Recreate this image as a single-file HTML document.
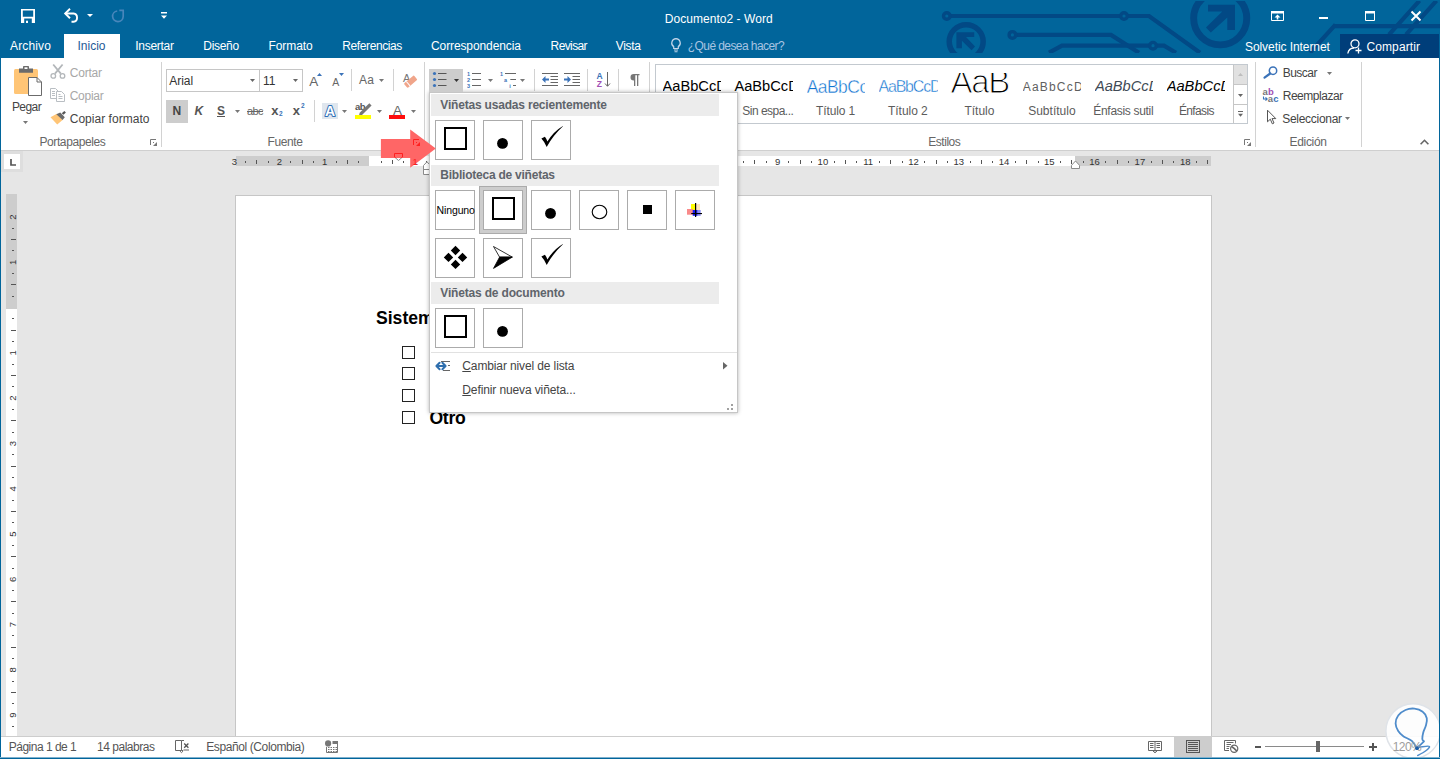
<!DOCTYPE html>
<html lang="es">
<head>
<meta charset="utf-8">
<title>Documento2 - Word</title>
<style>
*{box-sizing:border-box;margin:0;padding:0}
html,body{width:1440px;height:759px;overflow:hidden;background:#e6e6e6}
body{font-family:"Liberation Sans",sans-serif;font-size:12px;color:#444;position:relative}
.abs{position:absolute}
svg{display:block;overflow:visible}
svg text{font-family:"Liberation Sans",sans-serif}
.t{position:absolute;white-space:nowrap;line-height:1}
</style>
</head>
<body>
<div class="abs" style="left:0px;top:0px;width:1440px;height:58px;background:#01659b;"></div>
<svg class="abs" style="left:0;top:1.300px;overflow:hidden" width="1440" height="51.500" viewBox="0 1.300 1440 51.500"><g fill="none" stroke="#024985" stroke-width="4.2" stroke-linejoin="miter">
<path d="M950 16.300H1120.500"/><path d="M1127.500 16.300H1149L1200 53"/>
<path d="M1016 35.200H1111L1139 53"/>
<path d="M1049 53L1062 46H1149.500"/><path d="M1156.500 46H1164L1176 53"/>
<path d="M1334 26.500H1440M1335.500 25L1310 53"/>
<path d="M1419.500 1L1389 35M1436.500 1L1406 35"/>
</g>
<g fill="none" stroke="#024985" stroke-width="3.400">
<circle cx="946.800" cy="16.300" r="3.300"/><circle cx="1124" cy="16.300" r="3.300"/>
<circle cx="1012.400" cy="35.200" r="3.300"/><circle cx="1153" cy="46" r="3.300"/>
</g>
<g fill="none" stroke="#024985">
<circle cx="966.200" cy="41.900" r="16.950" stroke-width="5.500"/>
<circle cx="1220.200" cy="18.600" r="26.550" stroke-width="6.900"/>
</g>
<g fill="#024985">
<path d="M956.400 32.600H974.200V37.400H966L975 46.800L971.600 50.500L961.900 41V48.600H956.400Z"/>
<path d="M1208 5.100H1235V30.400H1227.300V17.800L1210.800 32.800L1206 27.700L1222.300 11.900H1208Z"/>
</g></svg>
<div class="abs" style="left:1340px;top:34px;width:99px;height:24px;background:#003e7a;"></div>
<svg class="abs" style="left:21px;top:8.5px;" width="14" height="14" viewBox="0 0 14 14"><path d="M0 0H14V14H0Z M1.800 1.600V7.700H12.200V1.600Z M3.200 9.500V14H10.800V9.500Z" fill="#fff" fill-rule="evenodd"/><rect x="5" y="11.700" width="2" height="2.300" fill="#fff"/></svg>
<svg class="abs" style="left:64px;top:8px;" width="15" height="15" viewBox="0 0 15 15"><path d="M1 5.500H9.500A4.200 4.200 0 0 1 9.500 13.800H7.500" fill="none" stroke="#fff" stroke-width="1.900"/><path d="M6 0.800L1.200 5.500L6 10.200" fill="none" stroke="#fff" stroke-width="1.900"/></svg>
<svg class="abs" style="left:87px;top:14px;" width="6" height="3" viewBox="0 0 6 3"><path d="M0 0H6 L3 3Z" fill="#fff"/></svg>
<svg class="abs" style="left:111px;top:8px;" width="14" height="15" viewBox="0 0 14 15"><path d="M6.200 3A5.300 5.300 0 1 0 12.200 8.500V2.300M13 2.300H8.300" fill="none" stroke="#4886bb" stroke-width="1.700"/></svg>
<svg class="abs" style="left:161px;top:12px;" width="6" height="7" viewBox="0 0 6 7"><path d="M0 0H6V1.400H0Z M0 3.500H6L3 6.800Z" fill="#fff"/></svg>
<div class="t" style="left:664.70px;top:13.00px;font-size:12px;color:#fff;letter-spacing:0.050px;">Documento2 - Word</div>
<svg class="abs" style="left:1271px;top:11px;" width="13" height="10" viewBox="0 0 13 10"><path d="M0.500 0.500H12.500V9.500H0.500Z" fill="none" stroke="#fff" stroke-width="1"/><path d="M0 0H13V2.500H0Z" fill="#fff"/><path d="M6.500 3.500L3.500 6.500H5.700V8.500H7.300V6.500H9.500Z" fill="#fff"/></svg>
<div class="abs" style="left:1319px;top:17px;width:9px;height:2px;background:#fff;"></div>
<svg class="abs" style="left:1365px;top:11px;" width="10" height="10" viewBox="0 0 10 10"><path d="M0.500 0.500H9.500V9.500H0.500Z" fill="none" stroke="#fff" stroke-width="1"/><path d="M0 0H10V2.500H0Z" fill="#fff"/></svg>
<svg class="abs" style="left:1411px;top:11px;" width="10" height="10" viewBox="0 0 10 10"><path d="M0.500 0.500L9.500 9.500M9.500 0.500L0.500 9.500" stroke="#fff" stroke-width="2"/></svg>
<div class="abs" style="left:64px;top:34px;width:56px;height:24px;background:#fff;"></div>
<div class="t" style="left:10.00px;top:40.00px;font-size:12px;color:#fff;letter-spacing:0.141px;">Archivo</div>
<div class="t" style="left:77.50px;top:40.00px;font-size:12px;color:#1e5a96;letter-spacing:-0.002px;">Inicio</div>
<div class="t" style="left:135.20px;top:40.00px;font-size:12px;color:#fff;letter-spacing:-0.273px;">Insertar</div>
<div class="t" style="left:203.30px;top:40.00px;font-size:12px;color:#fff;letter-spacing:-0.309px;">Diseño</div>
<div class="t" style="left:268.50px;top:40.00px;font-size:12px;color:#fff;letter-spacing:-0.068px;">Formato</div>
<div class="t" style="left:342.30px;top:40.00px;font-size:12px;color:#fff;letter-spacing:-0.403px;">Referencias</div>
<div class="t" style="left:431.00px;top:40.00px;font-size:12px;color:#fff;letter-spacing:-0.106px;">Correspondencia</div>
<div class="t" style="left:550.60px;top:40.00px;font-size:12px;color:#fff;letter-spacing:-0.611px;">Revisar</div>
<div class="t" style="left:615.80px;top:40.00px;font-size:12px;color:#fff;letter-spacing:-0.332px;">Vista</div>
<svg class="abs" style="left:671px;top:38px;" width="10" height="15" viewBox="0 0 10 15"><path d="M5 0.700A4.300 4.300 0 0 1 7.300 8.600V10.500H2.700V8.600A4.300 4.300 0 0 1 5 0.700Z" fill="none" stroke="#c4d6ea" stroke-width="1.200"/><path d="M3 12H7M3.500 13.800H6.500" stroke="#c4d6ea" stroke-width="1.100"/></svg>
<div class="t" style="left:687.80px;top:40.00px;font-size:12px;color:#a8c4e2;letter-spacing:-0.580px;">¿Qué desea hacer?</div>
<div class="t" style="left:1245.00px;top:41.00px;font-size:12px;color:#fff;letter-spacing:-0.073px;">Solvetic Internet</div>
<svg class="abs" style="left:1347px;top:39px;" width="16" height="15" viewBox="0 0 16 15"><circle cx="8" cy="4.800" r="4" fill="none" stroke="#fff" stroke-width="1.300"/><path d="M0.800 14.500C1.500 10.500 4 9 7 9" fill="none" stroke="#fff" stroke-width="1.300"/><path d="M11.500 8.500V14.500M8.500 11.500H14.500" stroke="#fff" stroke-width="1.300"/></svg>
<div class="t" style="left:1366.50px;top:41.00px;font-size:12px;color:#fff;letter-spacing:0.092px;">Compartir</div>
<div class="abs" style="left:1px;top:58px;width:1439px;height:92px;background:#fff;"></div>
<div class="abs" style="left:0px;top:150px;width:1440px;height:1px;background:#cfcfcf;"></div>
<div class="abs" style="left:161px;top:62px;width:1px;height:85px;background:#d2d2d2;"></div>
<div class="abs" style="left:424px;top:62px;width:1px;height:85px;background:#d2d2d2;"></div>
<div class="abs" style="left:649px;top:62px;width:1px;height:85px;background:#d2d2d2;"></div>
<div class="abs" style="left:1255px;top:62px;width:1px;height:85px;background:#d2d2d2;"></div>
<div class="abs" style="left:1361px;top:62px;width:1px;height:85px;background:#d2d2d2;"></div>
<svg class="abs" style="left:13px;top:65px;" width="30" height="32" viewBox="0 0 30 32"><rect x="1" y="4" width="24" height="25" rx="1.500" fill="#ffc576"/>
<path d="M6 3.500H10V1.800Q10 1 10.800 1H15.200Q16 1 16 1.800V3.500H20V7.700H6Z" fill="#6b6b6b"/><rect x="11.500" y="2.300" width="3" height="1.700" fill="#fff"/>
<path d="M15.500 12.500H24L28.500 17V30.500H15.500Z" fill="#fff" stroke="#6b6b6b" stroke-width="1"/><path d="M24 12.500V17H28.500" fill="none" stroke="#6b6b6b" stroke-width="1"/></svg>
<div class="t" style="left:11.90px;top:101.00px;font-size:12px;color:#444;letter-spacing:-0.564px;">Pegar</div>
<svg class="abs" style="left:23px;top:121.3px;" width="5" height="3" viewBox="0 0 5 3"><path d="M0 0H5 L2.5 3Z" fill="#777"/></svg>
<svg class="abs" style="left:50px;top:64px;" width="16" height="15" viewBox="0 0 16 15"><path d="M3.200 0.500L10.800 9.600M12.600 0.500L5 9.600" stroke="#b3b7ba" stroke-width="1.800" fill="none"/>
<circle cx="3.300" cy="11.900" r="2.300" fill="none" stroke="#b3b7ba" stroke-width="1.300"/><circle cx="12.500" cy="11.900" r="2.300" fill="none" stroke="#b3b7ba" stroke-width="1.300"/></svg>
<div class="t" style="left:69.70px;top:67.00px;font-size:12px;color:#a7a7a7;letter-spacing:-0.190px;">Cortar</div>
<svg class="abs" style="left:50px;top:88px;" width="16" height="14" viewBox="0 0 16 14"><path d="M0.500 0.500H5.500L8 3V4.500M0.500 0.500V10.500H6" fill="none" stroke="#b9bec3" stroke-width="1"/>
<path d="M2 3.500H5M2 5.500H5M2 7.500H5" stroke="#b9bec3" stroke-width="1"/>
<path d="M6.500 3.500H11.500L14.500 6.500V13.500H6.500Z" fill="#fff" stroke="#b9bec3" stroke-width="1"/>
<path d="M8.500 8.500H12.500M8.500 10.500H12.500M8.500 6.500H10.500" stroke="#b9bec3" stroke-width="1"/></svg>
<div class="t" style="left:69.70px;top:90.00px;font-size:12px;color:#a7a7a7;letter-spacing:-0.275px;">Copiar</div>
<svg class="abs" style="left:50px;top:111px;" width="16" height="14" viewBox="0 0 16 14"><path d="M0.500 6.300L6.800 2.800L12.600 8.900L7.200 13.500Z" fill="#ffc576"/>
<path d="M6.300 3.200L10.300 1.400L14.800 6.300L12.600 8.900Z" fill="#6b6b6b"/>
<path d="M11.700 2.300L14.400 0.100L15.900 1.400L13.500 3.700Z" fill="#555"/></svg>
<div class="t" style="left:69.70px;top:113.00px;font-size:12px;color:#444;letter-spacing:0.031px;">Copiar formato</div>
<div class="t" style="left:39.50px;top:136.00px;font-size:12px;color:#666;letter-spacing:-0.410px;">Portapapeles</div>
<svg class="abs" style="left:150px;top:139px;" width="7" height="7" viewBox="0 0 7 7"><path d="M0.500 6V0.500H6" fill="none" stroke="#777" stroke-width="1"/><rect x="3" y="3" width="1" height="1" fill="#777"/><path d="M7 3V7H3Z" fill="#777"/></svg>
<div class="abs" style="left:166px;top:69px;width:94px;height:23px;background:#fff;border:1px solid #c6c6c6;"></div>
<div class="abs" style="left:259px;top:69px;width:44px;height:23px;background:#fff;border:1px solid #c6c6c6;"></div>
<div class="t" style="left:169.30px;top:75.00px;font-size:12px;color:#333;letter-spacing:-0.061px;">Arial</div>
<svg class="abs" style="left:250px;top:79.3px;" width="5" height="3" viewBox="0 0 5 3"><path d="M0 0H5 L2.5 3Z" fill="#666"/></svg>
<div class="t" style="left:263.00px;top:75.00px;font-size:12px;color:#333;letter-spacing:-0.079px;">11</div>
<svg class="abs" style="left:293px;top:79.3px;" width="5" height="3" viewBox="0 0 5 3"><path d="M0 0H5 L2.5 3Z" fill="#666"/></svg>
<div class="t" style="left:309.30px;top:74.75px;font-size:13.5px;color:#666;letter-spacing:0.196px;">A</div>
<svg class="abs" style="left:317px;top:73px;" width="5" height="3" viewBox="0 0 5 3"><path d="M0 3H5L2.500 0Z" fill="#3b73b9"/></svg>
<div class="t" style="left:332.20px;top:76.75px;font-size:10.5px;color:#666;letter-spacing:0.297px;">A</div>
<svg class="abs" style="left:339px;top:73px;" width="5" height="3" viewBox="0 0 5 3"><path d="M0 0H5 L2.5 3Z" fill="#3b73b9"/></svg>
<div class="abs" style="left:351px;top:69px;width:1px;height:22px;background:#d2d2d2;"></div>
<div class="t" style="left:359.00px;top:74.00px;font-size:12px;color:#666;letter-spacing:0.161px;">Aa</div>
<svg class="abs" style="left:379px;top:79px;" width="5" height="3" viewBox="0 0 5 3"><path d="M0 0H5 L2.5 3Z" fill="#777"/></svg>
<div class="abs" style="left:393px;top:69px;width:1px;height:22px;background:#d2d2d2;"></div>
<div class="t" style="left:403.00px;top:72.50px;font-size:11px;color:#777;letter-spacing:-0.637px;">A</div>
<svg class="abs" style="left:403px;top:74px;" width="15" height="15" viewBox="0 0 15 15"><g transform="rotate(-40 7.500 7.500)"><rect x="1" y="4.800" width="13" height="5.800" rx="1" fill="#f0a58a"/><rect x="3.800" y="4.800" width="1" height="5.800" fill="#fff"/></g></svg>
<div class="abs" style="left:166px;top:100px;width:22px;height:23px;background:#cdcdcd;"></div>
<div class="t" style="left:172.60px;top:105.00px;font-size:12px;color:#444;letter-spacing:0.134px;font-weight:bold;">N</div>
<div class="t" style="left:194.40px;top:105.00px;font-size:12px;color:#555;letter-spacing:-0.666px;font-weight:bold;font-style:italic;">K</div>
<div class="t" style="left:217.00px;top:105.00px;font-size:12px;color:#555;letter-spacing:-0.504px;font-weight:bold;">S</div>
<div class="abs" style="left:216.5px;top:116px;width:8.5px;height:1px;background:#555;"></div>
<svg class="abs" style="left:235.3px;top:110px;" width="5" height="3" viewBox="0 0 5 3"><path d="M0 0H5 L2.5 3Z" fill="#777"/></svg>
<div class="t" style="left:247.00px;top:105.50px;font-size:11px;color:#666;letter-spacing:-0.578px;text-decoration:line-through;">abc</div>
<div class="t" style="left:271.20px;top:104.00px;font-size:13px;color:#555;letter-spacing:-0.030px;font-weight:bold;">x</div>
<div class="t" style="left:279.00px;top:111.25px;font-size:6.5px;color:#3b73b9;font-weight:bold;">2</div>
<div class="t" style="left:292.80px;top:104.00px;font-size:13px;color:#555;letter-spacing:-0.030px;font-weight:bold;">x</div>
<div class="t" style="left:301.00px;top:103.25px;font-size:6.5px;color:#3b73b9;font-weight:bold;">2</div>
<div class="abs" style="left:314px;top:100px;width:1px;height:22px;background:#d2d2d2;"></div>
<div class="abs" style="left:322px;top:103px;width:16px;height:16px;background:#dfe6ee;"></div>
<svg class="abs" style="left:322px;top:103px" width="16" height="16" viewBox="0 0 16 16"><text x="8" y="12.700" text-anchor="middle" font-family="Liberation Sans, sans-serif" font-weight="bold" font-size="14" fill="#fff" stroke="#2f6fb7" stroke-width="2" paint-order="stroke" stroke-linejoin="round">A</text></svg>
<svg class="abs" style="left:342px;top:110px;" width="5" height="3" viewBox="0 0 5 3"><path d="M0 0H5 L2.5 3Z" fill="#777"/></svg>
<div class="t" style="left:355.00px;top:101.75px;font-size:9.5px;color:#555;letter-spacing:-0.543px;font-weight:bold;">ab</div>
<svg class="abs" style="left:358px;top:103px;" width="14" height="13" viewBox="0 0 14 13"><path d="M11.300 0.300L13.600 2.500L4 12L1 12.600L1.700 9.800Z" fill="#777"/></svg>
<div class="abs" style="left:355px;top:115px;width:16px;height:4px;background:#ffff00;"></div>
<svg class="abs" style="left:377px;top:110px;" width="5" height="3" viewBox="0 0 5 3"><path d="M0 0H5 L2.5 3Z" fill="#777"/></svg>
<div class="t" style="left:393.00px;top:103.75px;font-size:13.5px;color:#666;letter-spacing:-0.004px;">A</div>
<div class="abs" style="left:389px;top:115px;width:16px;height:4px;background:#ff0d0d;"></div>
<svg class="abs" style="left:411px;top:110px;" width="5" height="3" viewBox="0 0 5 3"><path d="M0 0H5 L2.5 3Z" fill="#777"/></svg>
<div class="t" style="left:267.50px;top:136.00px;font-size:12px;color:#666;letter-spacing:-0.393px;">Fuente</div>
<svg class="abs" style="left:413px;top:139px;" width="7" height="7" viewBox="0 0 7 7"><path d="M0.500 6V0.500H6" fill="none" stroke="#777" stroke-width="1"/><rect x="3" y="3" width="1" height="1" fill="#777"/><path d="M7 3V7H3Z" fill="#777"/></svg>
<div class="abs" style="left:429px;top:69px;width:34px;height:23px;background:#cdcdcd;"></div>
<svg class="abs" style="left:433px;top:69px;" width="14" height="20" viewBox="0 0 14 20"><circle cx="1.500" cy="4.5" r="1.600" fill="#3b73b9"/><rect x="5" y="4" width="8.500" height="1" fill="#555"/><circle cx="1.500" cy="10.5" r="1.600" fill="#3b73b9"/><rect x="5" y="10" width="8.500" height="1" fill="#555"/><circle cx="1.500" cy="16.5" r="1.600" fill="#3b73b9"/><rect x="5" y="16" width="8.500" height="1" fill="#555"/></svg>
<svg class="abs" style="left:454px;top:79px;" width="5" height="3" viewBox="0 0 5 3"><path d="M0 0H5 L2.5 3Z" fill="#333"/></svg>
<svg class="abs" style="left:467px;top:69px" width="15" height="20" viewBox="0 0 15 20"><rect x="5" y="4" width="9" height="1" fill="#666"/><rect x="5" y="10" width="9" height="1" fill="#666"/><rect x="5" y="16" width="9" height="1" fill="#666"/><g font-family="Liberation Sans, sans-serif" font-size="5.500" font-weight="bold" fill="#3b73b9"><text x="0" y="6.500">1</text><text x="0" y="12.500">2</text><text x="0" y="18.500">3</text></g></svg>
<svg class="abs" style="left:488px;top:79px;" width="5" height="3" viewBox="0 0 5 3"><path d="M0 0H5 L2.5 3Z" fill="#777"/></svg>
<svg class="abs" style="left:500px;top:69px" width="17" height="20" viewBox="0 0 17 20"><rect x="5" y="4" width="11" height="1" fill="#666"/><rect x="10.300" y="10" width="5.700" height="1" fill="#666"/><rect x="13" y="16" width="3" height="1" fill="#666"/><g font-family="Liberation Sans, sans-serif" font-size="5.500" font-weight="bold" fill="#3b73b9"><text x="0" y="6.500">1</text><text x="4" y="12.500">a</text><text x="9.300" y="18.500">i</text></g></svg>
<svg class="abs" style="left:520px;top:79px;" width="5" height="3" viewBox="0 0 5 3"><path d="M0 0H5 L2.5 3Z" fill="#777"/></svg>
<div class="abs" style="left:534px;top:69px;width:1px;height:22px;background:#d2d2d2;"></div>
<svg class="abs" style="left:542px;top:69px;" width="16" height="20" viewBox="0 0 16 20"><rect x="0" y="4" width="16" height="1" fill="#666"/><rect x="8.500" y="7" width="7.500" height="1" fill="#666"/><rect x="8.500" y="10" width="7.500" height="1" fill="#666"/><rect x="8.500" y="13" width="7.500" height="1" fill="#666"/><rect x="0" y="16" width="16" height="1" fill="#666"/><path d="M7 9.500H3.500V7L0 10.500L3.500 14V11.500H7Z" fill="#3b73b9"/></svg>
<svg class="abs" style="left:564px;top:69px;" width="16" height="20" viewBox="0 0 16 20"><rect x="0" y="4" width="16" height="1" fill="#666"/><rect x="8.500" y="7" width="7.500" height="1" fill="#666"/><rect x="8.500" y="10" width="7.500" height="1" fill="#666"/><rect x="8.500" y="13" width="7.500" height="1" fill="#666"/><rect x="0" y="16" width="16" height="1" fill="#666"/><path d="M0 9.500H3.500V7L7 10.500L3.500 14V11.500H0Z" fill="#3b73b9"/></svg>
<div class="abs" style="left:587px;top:69px;width:1px;height:22px;background:#d2d2d2;"></div>
<svg class="abs" style="left:596px;top:70px" width="15" height="18" viewBox="0 0 15 18"><g font-family="Liberation Sans, sans-serif" font-size="8.500" font-weight="bold"><text x="0.500" y="8.700" fill="#3b73b9">A</text><text x="0.800" y="16.500" fill="#a14fb5">Z</text></g><path d="M11.500 2V16M9 13.500L11.500 16.300L14 13.500" fill="none" stroke="#666" stroke-width="1"/></svg>
<div class="abs" style="left:618px;top:69px;width:1px;height:22px;background:#d2d2d2;"></div>
<svg class="abs" style="left:628.5px;top:74px;" width="11" height="12" viewBox="0 0 11 12"><path d="M4.800 0H10.500V1.300H9.300V12H8V1.300H6.300V12H5V6.600H4.800A3.300 3.300 0 0 1 4.800 0Z" fill="#777"/></svg>
<div class="abs" style="left:655px;top:64px;width:593px;height:60px;background:#fff;border:1px solid #c3c9cf;"></div>
<div class="t" style="left:662.50px;top:78.66px;width:58.8px;overflow:hidden;font-size:14.67px;color:#000;">AaBbCcDd</div>
<div class="t" style="left:734.40px;top:78.66px;width:58.8px;overflow:hidden;font-size:14.67px;color:#000;">AaBbCcDd</div>
<div class="t" style="left:806.70px;top:79.25px;width:58.6px;overflow:hidden;font-size:17.5px;color:#0f73d1;letter-spacing:-0.548px;-webkit-text-stroke:0.400px #fff;">AaBbCcD</div>
<div class="t" style="left:878.50px;top:78.50px;width:59px;overflow:hidden;font-size:16px;color:#0f73d1;letter-spacing:-1.206px;-webkit-text-stroke:0.350px #fff;">AaBbCcDd</div>
<div class="abs" style="left:948px;top:72.500px;width:62px;height:30px;overflow:hidden"><div class="t" style="left:2.500px;top:-7.500px;font-size:33px;color:#000;-webkit-text-stroke:1.100px #fff;letter-spacing:-1.300px">AaB</div></div>
<div class="t" style="left:1022.70px;top:81.00px;width:58.6px;overflow:hidden;font-size:12px;color:#5f5f5f;letter-spacing:1.205px;">AaBbCcDd</div>
<div class="t" style="left:1094.90px;top:78.66px;width:58.5px;overflow:hidden;font-size:14.67px;color:#404a55;font-style:italic;">AaBbCcDd</div>
<div class="t" style="left:1166.70px;top:78.66px;width:58.5px;overflow:hidden;font-size:14.67px;color:#000;font-style:italic;">AaBbCcDd</div>
<div class="t" style="left:742.30px;top:105.00px;font-size:12px;color:#5c5c5c;letter-spacing:-0.518px;">Sin espa...</div>
<div class="t" style="left:816.00px;top:105.00px;font-size:12px;color:#5c5c5c;letter-spacing:-0.103px;">Título 1</div>
<div class="t" style="left:888.00px;top:105.00px;font-size:12px;color:#5c5c5c;letter-spacing:-0.040px;">Título 2</div>
<div class="t" style="left:964.40px;top:105.00px;font-size:12px;color:#5c5c5c;letter-spacing:-0.002px;">Título</div>
<div class="t" style="left:1028.20px;top:105.00px;font-size:12px;color:#5c5c5c;letter-spacing:0.004px;">Subtítulo</div>
<div class="t" style="left:1093.30px;top:105.00px;font-size:12px;color:#5c5c5c;letter-spacing:-0.310px;">Énfasis sutil</div>
<div class="t" style="left:1178.90px;top:105.00px;font-size:12px;color:#5c5c5c;letter-spacing:-0.636px;">Énfasis</div>
<div class="abs" style="left:1233px;top:65px;width:14px;height:20px;background:#e1e1e1;border-left:1px solid #c6c6c6;border-bottom:1px solid #c6c6c6;"></div>
<div class="abs" style="left:1233px;top:85px;width:14px;height:20px;background:#fff;border-left:1px solid #c6c6c6;border-bottom:1px solid #c6c6c6;"></div>
<div class="abs" style="left:1233px;top:105px;width:14px;height:18px;background:#fff;border-left:1px solid #c6c6c6;"></div>
<svg class="abs" style="left:1238px;top:73px;" width="5" height="3" viewBox="0 0 5 3"><path d="M0 3H5L2.500 0Z" fill="#bdbdbd"/></svg>
<svg class="abs" style="left:1238px;top:94px;" width="5" height="3" viewBox="0 0 5 3"><path d="M0 0H5 L2.5 3Z" fill="#666"/></svg>
<svg class="abs" style="left:1238px;top:110.5px;" width="5" height="6" viewBox="0 0 5 6"><path d="M0 0H5V1H0Z M0 2.800H5L2.500 5.800Z" fill="#666"/></svg>
<div class="t" style="left:928.30px;top:136.00px;font-size:12px;color:#666;letter-spacing:-0.478px;">Estilos</div>
<svg class="abs" style="left:1244px;top:139px;" width="7" height="7" viewBox="0 0 7 7"><path d="M0.500 6V0.500H6" fill="none" stroke="#777" stroke-width="1"/><rect x="3" y="3" width="1" height="1" fill="#777"/><path d="M7 3V7H3Z" fill="#777"/></svg>
<svg class="abs" style="left:1263px;top:66px;" width="15" height="13" viewBox="0 0 15 13"><circle cx="10" cy="4.700" r="3.700" fill="none" stroke="#3b73b9" stroke-width="1.500"/><path d="M7.200 7.500L1.500 11.600" stroke="#3b73b9" stroke-width="2.200" stroke-linecap="round"/></svg>
<div class="t" style="left:1282.70px;top:67.00px;font-size:12px;color:#444;letter-spacing:-0.525px;">Buscar</div>
<svg class="abs" style="left:1327px;top:71.5px;" width="5" height="3" viewBox="0 0 5 3"><path d="M0 0H5 L2.5 3Z" fill="#777"/></svg>
<svg class="abs" style="left:1262px;top:86px" width="18" height="17" viewBox="0 0 18 17"><g font-family="Liberation Sans, sans-serif" font-size="9.500" font-weight="bold"><text x="0.500" y="8.600" fill="#777">a</text><text x="6" y="8.600" fill="#a14fb5">b</text><text x="5.800" y="15.800" fill="#777">a</text><text x="11.300" y="15.800" fill="#3b73b9">c</text></g><path d="M1.500 10.500V13H5M3.500 11.300L5.200 13L3.500 14.700" fill="none" stroke="#3b73b9" stroke-width="1.100"/></svg>
<div class="t" style="left:1282.70px;top:90.00px;font-size:12px;color:#444;letter-spacing:-0.469px;">Reemplazar</div>
<svg class="abs" style="left:1266px;top:109px;" width="11" height="16" viewBox="0 0 11 16"><path d="M1.500 1.200V12.800L4.300 10.200L6.300 14.800L8 14L6 9.600H9.800Z" fill="#fff" stroke="#555" stroke-width="1" stroke-linejoin="miter"/></svg>
<div class="t" style="left:1282.30px;top:113.00px;font-size:12px;color:#444;letter-spacing:-0.300px;">Seleccionar</div>
<svg class="abs" style="left:1345px;top:117px;" width="5" height="3" viewBox="0 0 5 3"><path d="M0 0H5 L2.5 3Z" fill="#777"/></svg>
<div class="t" style="left:1289.60px;top:136.00px;font-size:12px;color:#666;letter-spacing:-0.337px;">Edición</div>
<svg class="abs" style="left:1420px;top:139px;" width="9" height="6" viewBox="0 0 9 6"><path d="M0.600 5.300L4.500 1.300L8.400 5.300" fill="none" stroke="#666" stroke-width="1.600"/></svg>
<div class="abs" style="left:1px;top:151px;width:22px;height:21px;background:#dedede;"></div>
<div class="abs" style="left:4px;top:154px;width:16px;height:15px;background:#fff;"></div>
<svg class="abs" style="left:9.5px;top:159px;" width="6" height="7" viewBox="0 0 6 7"><path d="M1 0V6H6" fill="none" stroke="#555" stroke-width="1.700"/></svg>
<div class="abs" style="left:235px;top:195px;width:977px;height:542px;background:#fff;border:1px solid #c6c6c6;border-bottom:none;"></div>
<div class="abs" style="left:236px;top:156px;width:133px;height:10px;background:#cdcdcd;"></div>
<div class="abs" style="left:369px;top:156px;width:706px;height:10px;background:#fff;"></div>
<div class="abs" style="left:1075px;top:156px;width:136px;height:10px;background:#cdcdcd;"></div>
<svg class="abs" style="left:0;top:0" width="1440" height="180" viewBox="0 0 1440 180"><g font-family="Liberation Sans, sans-serif" font-size="9.500" fill="#333"><rect x="245" y="161" width="1" height="2" fill="#555"/><rect x="256" y="160" width="1" height="4" fill="#555"/><rect x="268" y="161" width="1" height="2" fill="#555"/><text x="279.4" y="164.700" text-anchor="middle">2</text><rect x="290" y="161" width="1" height="2" fill="#555"/><rect x="302" y="160" width="1" height="4" fill="#555"/><rect x="313" y="161" width="1" height="2" fill="#555"/><text x="324.7" y="164.700" text-anchor="middle">1</text><rect x="336" y="161" width="1" height="2" fill="#555"/><rect x="347" y="160" width="1" height="4" fill="#555"/><rect x="358" y="161" width="1" height="2" fill="#555"/><rect x="381" y="161" width="1" height="2" fill="#555"/><rect x="392" y="160" width="1" height="4" fill="#555"/><rect x="403" y="161" width="1" height="2" fill="#555"/><text x="415.3" y="164.700" text-anchor="middle">1</text><rect x="426" y="161" width="1" height="2" fill="#555"/><rect x="437" y="160" width="1" height="4" fill="#555"/><rect x="449" y="161" width="1" height="2" fill="#555"/><text x="460.6" y="164.700" text-anchor="middle">2</text><rect x="471" y="161" width="1" height="2" fill="#555"/><rect x="483" y="160" width="1" height="4" fill="#555"/><rect x="494" y="161" width="1" height="2" fill="#555"/><text x="505.9" y="164.700" text-anchor="middle">3</text><rect x="517" y="161" width="1" height="2" fill="#555"/><rect x="528" y="160" width="1" height="4" fill="#555"/><rect x="539" y="161" width="1" height="2" fill="#555"/><text x="551.2" y="164.700" text-anchor="middle">4</text><rect x="562" y="161" width="1" height="2" fill="#555"/><rect x="573" y="160" width="1" height="4" fill="#555"/><rect x="585" y="161" width="1" height="2" fill="#555"/><text x="596.5" y="164.700" text-anchor="middle">5</text><rect x="607" y="161" width="1" height="2" fill="#555"/><rect x="619" y="160" width="1" height="4" fill="#555"/><rect x="630" y="161" width="1" height="2" fill="#555"/><text x="641.7" y="164.700" text-anchor="middle">6</text><rect x="653" y="161" width="1" height="2" fill="#555"/><rect x="664" y="160" width="1" height="4" fill="#555"/><rect x="675" y="161" width="1" height="2" fill="#555"/><text x="687.0" y="164.700" text-anchor="middle">7</text><rect x="698" y="161" width="1" height="2" fill="#555"/><rect x="709" y="160" width="1" height="4" fill="#555"/><rect x="720" y="161" width="1" height="2" fill="#555"/><text x="732.3" y="164.700" text-anchor="middle">8</text><rect x="743" y="161" width="1" height="2" fill="#555"/><rect x="754" y="160" width="1" height="4" fill="#555"/><rect x="766" y="161" width="1" height="2" fill="#555"/><text x="777.6" y="164.700" text-anchor="middle">9</text><rect x="788" y="161" width="1" height="2" fill="#555"/><rect x="800" y="160" width="1" height="4" fill="#555"/><rect x="811" y="161" width="1" height="2" fill="#555"/><text x="822.9" y="164.700" text-anchor="middle">10</text><rect x="834" y="161" width="1" height="2" fill="#555"/><rect x="845" y="160" width="1" height="4" fill="#555"/><rect x="856" y="161" width="1" height="2" fill="#555"/><text x="868.2" y="164.700" text-anchor="middle">11</text><rect x="879" y="161" width="1" height="2" fill="#555"/><rect x="890" y="160" width="1" height="4" fill="#555"/><rect x="902" y="161" width="1" height="2" fill="#555"/><text x="913.5" y="164.700" text-anchor="middle">12</text><rect x="924" y="161" width="1" height="2" fill="#555"/><rect x="936" y="160" width="1" height="4" fill="#555"/><rect x="947" y="161" width="1" height="2" fill="#555"/><text x="958.8" y="164.700" text-anchor="middle">13</text><rect x="970" y="161" width="1" height="2" fill="#555"/><rect x="981" y="160" width="1" height="4" fill="#555"/><rect x="992" y="161" width="1" height="2" fill="#555"/><text x="1004.1" y="164.700" text-anchor="middle">14</text><rect x="1015" y="161" width="1" height="2" fill="#555"/><rect x="1026" y="160" width="1" height="4" fill="#555"/><rect x="1038" y="161" width="1" height="2" fill="#555"/><text x="1049.3" y="164.700" text-anchor="middle">15</text><rect x="1060" y="161" width="1" height="2" fill="#555"/><rect x="1071" y="160" width="1" height="4" fill="#555"/><rect x="1083" y="161" width="1" height="2" fill="#555"/><text x="1094.6" y="164.700" text-anchor="middle">16</text><rect x="1105" y="161" width="1" height="2" fill="#555"/><rect x="1117" y="160" width="1" height="4" fill="#555"/><rect x="1128" y="161" width="1" height="2" fill="#555"/><text x="1139.9" y="164.700" text-anchor="middle">17</text><rect x="1151" y="161" width="1" height="2" fill="#555"/><rect x="1162" y="160" width="1" height="4" fill="#555"/><rect x="1173" y="161" width="1" height="2" fill="#555"/><text x="1185.2" y="164.700" text-anchor="middle">18</text><rect x="1196" y="161" width="1" height="2" fill="#555"/><rect x="1207" y="160" width="1" height="4" fill="#555"/><text x="234.300" y="164.700" text-anchor="middle">3</text></g></svg>
<svg class="abs" style="left:394px;top:153px;" width="9" height="8" viewBox="0 0 9 8"><path d="M0.500 0.500H8.500V4L4.500 7.500L0.500 4Z" fill="#fff" stroke="#8a8a8a" stroke-width="1"/></svg>
<svg class="abs" style="left:423px;top:161px;" width="8" height="14" viewBox="0 0 8 14"><path d="M0.500 13.500V4.500L4 0.800L7.500 4.500V13.500Z M0.500 8.500H7.500" fill="#fff" stroke="#8a8a8a" stroke-width="1"/></svg>
<svg class="abs" style="left:1071px;top:160px;" width="9" height="9" viewBox="0 0 9 9"><path d="M0.500 8.500V5.300L4.500 1L8.500 5.300V8.500Z" fill="#fff" stroke="#8a8a8a" stroke-width="1"/></svg>
<div class="abs" style="left:6px;top:194px;width:11px;height:115px;background:#cdcdcd;"></div>
<div class="abs" style="left:6px;top:309px;width:11px;height:428px;background:#fff;"></div>
<svg class="abs" style="left:0;top:0" width="30" height="737" viewBox="0 0 30 737"><g font-family="Liberation Sans, sans-serif" font-size="9.500" fill="#333"><text transform="translate(15.800 217.0) rotate(-90)" text-anchor="middle">2</text><rect x="12" y="228" width="2" height="1" fill="#555"/><rect x="11" y="239" width="5" height="1" fill="#555"/><rect x="12" y="250" width="2" height="1" fill="#555"/><text transform="translate(15.800 262.3) rotate(-90)" text-anchor="middle">1</text><rect x="12" y="273" width="2" height="1" fill="#555"/><rect x="11" y="284" width="5" height="1" fill="#555"/><rect x="12" y="296" width="2" height="1" fill="#555"/><rect x="12" y="318" width="2" height="1" fill="#555"/><rect x="11" y="330" width="5" height="1" fill="#555"/><rect x="12" y="341" width="2" height="1" fill="#555"/><text transform="translate(15.800 352.9) rotate(-90)" text-anchor="middle">1</text><rect x="12" y="364" width="2" height="1" fill="#555"/><rect x="11" y="375" width="5" height="1" fill="#555"/><rect x="12" y="386" width="2" height="1" fill="#555"/><text transform="translate(15.800 398.2) rotate(-90)" text-anchor="middle">2</text><rect x="12" y="409" width="2" height="1" fill="#555"/><rect x="11" y="420" width="5" height="1" fill="#555"/><rect x="12" y="432" width="2" height="1" fill="#555"/><text transform="translate(15.800 443.5) rotate(-90)" text-anchor="middle">3</text><rect x="12" y="454" width="2" height="1" fill="#555"/><rect x="11" y="466" width="5" height="1" fill="#555"/><rect x="12" y="477" width="2" height="1" fill="#555"/><text transform="translate(15.800 488.8) rotate(-90)" text-anchor="middle">4</text><rect x="12" y="500" width="2" height="1" fill="#555"/><rect x="11" y="511" width="5" height="1" fill="#555"/><rect x="12" y="522" width="2" height="1" fill="#555"/><text transform="translate(15.800 534.0) rotate(-90)" text-anchor="middle">5</text><rect x="12" y="545" width="2" height="1" fill="#555"/><rect x="11" y="556" width="5" height="1" fill="#555"/><rect x="12" y="568" width="2" height="1" fill="#555"/><text transform="translate(15.800 579.3) rotate(-90)" text-anchor="middle">6</text><rect x="12" y="590" width="2" height="1" fill="#555"/><rect x="11" y="601" width="5" height="1" fill="#555"/><rect x="12" y="613" width="2" height="1" fill="#555"/><text transform="translate(15.800 624.6) rotate(-90)" text-anchor="middle">7</text><rect x="12" y="635" width="2" height="1" fill="#555"/><rect x="11" y="647" width="5" height="1" fill="#555"/><rect x="12" y="658" width="2" height="1" fill="#555"/><text transform="translate(15.800 669.9) rotate(-90)" text-anchor="middle">8</text><rect x="12" y="681" width="2" height="1" fill="#555"/><rect x="11" y="692" width="5" height="1" fill="#555"/><rect x="12" y="703" width="2" height="1" fill="#555"/><text transform="translate(15.800 715.2) rotate(-90)" text-anchor="middle">9</text><rect x="12" y="726" width="2" height="1" fill="#555"/></g></svg>
<div class="t" style="left:376.00px;top:310.20px;font-size:17.6px;color:#000;font-weight:bold;">Sistemas operativos</div>
<div class="abs" style="left:402px;top:346px;width:13px;height:13px;background:#fff;border:1px solid #222;"></div>
<div class="abs" style="left:402px;top:367px;width:13px;height:13px;background:#fff;border:1px solid #222;"></div>
<div class="abs" style="left:402px;top:389px;width:13px;height:13px;background:#fff;border:1px solid #222;"></div>
<div class="abs" style="left:402px;top:411px;width:13px;height:13px;background:#fff;border:1px solid #222;"></div>
<div class="t" style="left:429.40px;top:410.20px;font-size:17.6px;color:#000;letter-spacing:-0.238px;font-weight:bold;">Otro</div>
<div class="abs" style="left:429px;top:92px;width:309px;height:321px;background:#fff;border:1px solid #c6c6c6;box-shadow:0 0 4px rgba(0,0,0,0.300);"></div>
<div class="abs" style="left:429px;top:87px;width:34px;height:5px;background:#cdcdcd;"></div>
<div class="abs" style="left:431px;top:94px;width:288px;height:22px;background:#ececec;"></div>
<div class="t" style="left:440.30px;top:99.00px;font-size:12px;color:#5f646b;letter-spacing:-0.192px;font-weight:bold;">Viñetas usadas recientemente</div>
<div class="abs" style="left:431px;top:165px;width:288px;height:21px;background:#ececec;"></div>
<div class="t" style="left:440.30px;top:169.00px;font-size:12px;color:#5f646b;letter-spacing:-0.232px;font-weight:bold;">Biblioteca de viñetas</div>
<div class="abs" style="left:431px;top:282px;width:288px;height:22px;background:#ececec;"></div>
<div class="t" style="left:440.30px;top:287.00px;font-size:12px;color:#5f646b;letter-spacing:-0.175px;font-weight:bold;">Viñetas de documento</div>
<div class="abs" style="left:479px;top:186px;width:48px;height:48px;background:#cdcdcd;border:1px solid #ababab;"></div>
<div class="abs" style="left:435px;top:120px;width:40px;height:40px;background:#fff;border:1px solid #ababab;"></div>
<div class="abs" style="left:483px;top:120px;width:40px;height:40px;background:#fff;border:1px solid #ababab;"></div>
<div class="abs" style="left:531px;top:120px;width:40px;height:40px;background:#fff;border:1px solid #ababab;"></div>
<div class="abs" style="left:435px;top:190px;width:40px;height:40px;background:#fff;border:1px solid #ababab;"></div>
<div class="abs" style="left:483px;top:190px;width:40px;height:40px;background:#fff;border:1px solid #ababab;"></div>
<div class="abs" style="left:531px;top:190px;width:40px;height:40px;background:#fff;border:1px solid #ababab;"></div>
<div class="abs" style="left:579px;top:190px;width:40px;height:40px;background:#fff;border:1px solid #ababab;"></div>
<div class="abs" style="left:627px;top:190px;width:40px;height:40px;background:#fff;border:1px solid #ababab;"></div>
<div class="abs" style="left:675px;top:190px;width:40px;height:40px;background:#fff;border:1px solid #ababab;"></div>
<div class="abs" style="left:435px;top:238px;width:40px;height:40px;background:#fff;border:1px solid #ababab;"></div>
<div class="abs" style="left:483px;top:238px;width:40px;height:40px;background:#fff;border:1px solid #ababab;"></div>
<div class="abs" style="left:531px;top:238px;width:40px;height:40px;background:#fff;border:1px solid #ababab;"></div>
<div class="abs" style="left:435px;top:308px;width:40px;height:40px;background:#fff;border:1px solid #ababab;"></div>
<div class="abs" style="left:483px;top:308px;width:40px;height:40px;background:#fff;border:1px solid #ababab;"></div>
<div class="abs" style="left:444px;top:127px;width:23px;height:23px;border:2px solid #000;"></div>
<svg class="abs" style="left:483px;top:120px;" width="40" height="40" viewBox="0 0 40 40"><circle cx="19.500" cy="23.400" r="5.400" fill="#000"/></svg>
<svg class="abs" style="left:531px;top:120px;" width="40" height="40" viewBox="0 0 40 40"><path d="M10.400 18.600L13.900 16.700Q15.300 18.300 16.400 21.600Q22.500 11.500 31.900 6L32 6.300Q22 15.500 15.700 26.900Q13.200 21.500 10.400 18.600Z" fill="#000"/></svg>
<div class="t" style="left:436.50px;top:204.75px;font-size:10.5px;color:#000;letter-spacing:-0.116px;">Ninguno</div>
<div class="abs" style="left:492px;top:197px;width:23px;height:23px;border:2px solid #000;"></div>
<svg class="abs" style="left:531px;top:190px;" width="40" height="40" viewBox="0 0 40 40"><circle cx="19.500" cy="23.400" r="5.400" fill="#000"/></svg>
<svg class="abs" style="left:579px;top:190px;" width="40" height="40" viewBox="0 0 40 40"><ellipse cx="20.500" cy="22" rx="7.300" ry="6.700" fill="none" stroke="#000" stroke-width="1.100"/></svg>
<div class="abs" style="left:643px;top:205px;width:9px;height:9px;background:#000;"></div>
<svg class="abs" style="left:675px;top:190px;" width="40" height="40" viewBox="0 0 40 40"><rect x="16" y="14" width="4.600" height="6" fill="#ffff00"/><rect x="21" y="14" width="4" height="6" fill="#ffe8bd"/><rect x="12" y="19" width="6" height="5.700" fill="#f98a8a"/><rect x="17.700" y="20" width="5" height="5.800" fill="#1a1aee"/><rect x="22.700" y="20" width="3" height="5.800" fill="#8f8ff5"/><rect x="20" y="13" width="1.200" height="14" fill="#000"/><rect x="16.200" y="23" width="10.800" height="1.100" fill="#000"/></svg>
<svg class="abs" style="left:435px;top:238px;" width="40" height="40" viewBox="0 0 40 40"><path d="M20.5 7.8L25.2 12.5L20.5 17.2L15.8 12.5ZM13.5 14.7L18.2 19.4L13.5 24.1L8.8 19.4ZM27.5 14.7L32.2 19.4L27.5 24.1L22.8 19.4ZM20.5 21.7L25.2 26.4L20.5 31.1L15.8 26.4Z" fill="#000"/></svg>
<svg class="abs" style="left:483px;top:238px;" width="40" height="40" viewBox="0 0 40 40"><path d="M10.500 8.500L29.300 19.100L16.600 19.100Z" fill="#fff" stroke="#000" stroke-width="0.800"/><path d="M29.300 19.100L10.500 30.400L16.600 19.100Z" fill="#000" stroke="#000" stroke-width="0.800"/></svg>
<svg class="abs" style="left:531px;top:238px;" width="40" height="40" viewBox="0 0 40 40"><path d="M10.400 18.600L13.900 16.700Q15.300 18.300 16.400 21.600Q22.500 11.500 31.900 6L32 6.300Q22 15.500 15.700 26.900Q13.200 21.500 10.400 18.600Z" fill="#000"/></svg>
<div class="abs" style="left:444px;top:315px;width:23px;height:23px;border:2px solid #000;"></div>
<svg class="abs" style="left:483px;top:308px;" width="40" height="40" viewBox="0 0 40 40"><circle cx="19.500" cy="23.400" r="5.400" fill="#000"/></svg>
<div class="abs" style="left:431px;top:352px;width:306px;height:1px;background:#e1e1e1;"></div>
<svg class="abs" style="left:435px;top:361px;" width="16" height="11" viewBox="0 0 16 11"><path d="M4.600 1.800L1.400 5L4.600 8.200M7.400 1.800L10.600 5L7.400 8.200M1.600 5H10.400" fill="none" stroke="#2f6fae" stroke-width="2" stroke-linejoin="round" stroke-linecap="round"/><rect x="6" y="0" width="9" height="1" fill="#666"/><rect x="13" y="4" width="2" height="1" fill="#666"/><rect x="8" y="9" width="7" height="1" fill="#666"/></svg>
<div class="t" style="left:462.30px;top:360.00px;font-size:12px;color:#444;letter-spacing:-0.123px;"><u>C</u>ambiar nivel de lista</div>
<svg class="abs" style="left:723px;top:362px;" width="5" height="8" viewBox="0 0 5 8"><path d="M0 0L4.500 3.800L0 7.600Z" fill="#666"/></svg>
<div class="t" style="left:462.30px;top:384.00px;font-size:12px;color:#444;letter-spacing:-0.116px;"><u>D</u>efinir nueva viñeta...</div>
<div class="abs" style="left:731px;top:404px;width:2px;height:2px;background:#a0a0a0;"></div>
<div class="abs" style="left:731px;top:408px;width:2px;height:2px;background:#a0a0a0;"></div>
<div class="abs" style="left:727px;top:408px;width:2px;height:2px;background:#a0a0a0;"></div>
<svg class="abs" style="left:380px;top:129px;" width="57" height="40" viewBox="0 0 57 40"><path d="M0.900 10.100H30.200V0.400L55.800 19.400L30.200 38.700V28.900H0.900Z" fill="#ff6666"/></svg>
<svg class="abs" style="left:413px;top:139px;" width="7" height="7" viewBox="0 0 7 7"><path d="M0.500 6V0.500H6" fill="none" stroke="#ff2020" stroke-width="1"/><rect x="3" y="3" width="1" height="1" fill="#ff2020"/><path d="M7 3V7H3Z" fill="#ff2020"/></svg>
<svg class="abs" style="left:394px;top:153px;overflow:hidden;" width="9" height="5" viewBox="0 0 9 5"><path d="M0.500 0.500H8.500V4L4.500 7.500L0.500 4Z" fill="none" stroke="#ff2020" stroke-width="1"/></svg>
<svg class="abs" style="left:405px;top:155px" width="20" height="12" viewBox="405 155 20 12"><text x="415.200" y="164.700" text-anchor="middle" font-family="Liberation Sans, sans-serif" font-size="9.500" fill="#ff2020">1</text></svg>
<div class="abs" style="left:1px;top:736px;width:1438px;height:22px;background:#fff;border-top:1px solid #cdcdcd;"></div>
<div class="t" style="left:8.75px;top:741.00px;font-size:12px;color:#555;letter-spacing:-0.505px;">Página 1 de 1</div>
<div class="t" style="left:97.00px;top:741.00px;font-size:12px;color:#555;letter-spacing:-0.474px;">14 palabras</div>
<svg class="abs" style="left:175px;top:740px;" width="15" height="13" viewBox="0 0 15 13"><path d="M6.500 0.500H0.500V10.500H6.500M6.500 0.500V10.500M6.500 0.500H9M6.500 10.500H8M4.800 11L6.500 12.600L8.200 11" fill="none" stroke="#666" stroke-width="1"/><path d="M9.200 3.500L13.400 7.700M13.400 3.500L9.200 7.700" stroke="#555" stroke-width="1.300"/><rect x="8.500" y="9.500" width="5.500" height="1" fill="#666"/></svg>
<div class="t" style="left:206.25px;top:741.00px;font-size:12px;color:#555;letter-spacing:-0.399px;">Español (Colombia)</div>
<svg class="abs" style="left:325px;top:740px;" width="14" height="13" viewBox="0 0 14 13"><circle cx="3.100" cy="3.400" r="3.100" fill="#777"/><rect x="7.500" y="1" width="5.500" height="3" fill="#777"/><path d="M1.500 7V12.500H12.500V4" fill="none" stroke="#777" stroke-width="1"/><rect x="3" y="7" width="1.500" height="1" fill="#777"/><rect x="5.5" y="7" width="1.500" height="1" fill="#777"/><rect x="8" y="7" width="1.500" height="1" fill="#777"/><rect x="10.5" y="7" width="1.500" height="1" fill="#777"/><rect x="3" y="9" width="1.500" height="1" fill="#777"/><rect x="5.5" y="9" width="1.500" height="1" fill="#777"/><rect x="8" y="9" width="1.500" height="1" fill="#777"/><rect x="10.5" y="9" width="1.500" height="1" fill="#777"/><rect x="3" y="11" width="1.500" height="1" fill="#777"/><rect x="5.5" y="11" width="1.500" height="1" fill="#777"/><rect x="8" y="11" width="1.500" height="1" fill="#777"/><rect x="10.5" y="11" width="1.500" height="1" fill="#777"/></svg>
<svg class="abs" style="left:1148px;top:740px;" width="14" height="13" viewBox="0 0 14 13"><path d="M7 1.500V11.500M7 1.500H0.500V10.500H7M7 1.500H13.500V10.500H7M5 11L7 12.800L9 11" fill="none" stroke="#666" stroke-width="1"/><path d="M2 3.500H5.500M2 5.500H5.500M2 7.500H5.500M8.500 3.500H12M8.500 5.500H12M8.500 7.500H12" stroke="#666" stroke-width="1"/></svg>
<div class="abs" style="left:1174px;top:737px;width:38px;height:21px;background:#cdcdcd;"></div>
<svg class="abs" style="left:1186px;top:740px;" width="14" height="13" viewBox="0 0 14 13"><rect x="0.500" y="0.500" width="13" height="12" fill="none" stroke="#555" stroke-width="1"/><path d="M2 2.500H12M2 4.500H12M2 6.500H12M2 8.500H12M2 10.500H12" stroke="#555" stroke-width="1"/></svg>
<svg class="abs" style="left:1224px;top:740px;" width="15" height="13" viewBox="0 0 15 13"><path d="M11.500 3.500V0.500H0.500V10.500H5" fill="none" stroke="#666" stroke-width="1"/><path d="M2.500 2.500H9.500M2.500 4.500H7M2.500 6.500H5.500M2.500 8.500H5" stroke="#666" stroke-width="1"/><circle cx="10.200" cy="8.700" r="3.600" fill="#fff" stroke="#666" stroke-width="1.200"/><path d="M7.500 6.500Q10 8 12.800 11" fill="none" stroke="#666" stroke-width="1.800"/></svg>
<div class="abs" style="left:1255px;top:746px;width:6px;height:2px;background:#555;"></div>
<div class="abs" style="left:1265px;top:746px;width:99px;height:1px;background:#8a8a8a;"></div>
<div class="abs" style="left:1316px;top:741px;width:4px;height:11px;background:#666;"></div>
<svg class="abs" style="left:1369px;top:743px;" width="8" height="8" viewBox="0 0 8 8"><path d="M0 3H3V0H5V3H8V5H5V8H3V5H0Z" fill="#555"/></svg>
<svg class="abs" style="left:1384px;top:701px;overflow:hidden;" width="56" height="58" viewBox="0 0 56 58"><circle cx="29.200" cy="30" r="27.300" fill="#fff" fill-opacity="0.900" stroke="#dfe3e8" stroke-width="1.500"/><path d="M33.0 47.2C32.1 46.0 30.0 41.9 27.8 39.9C25.6 37.9 21.9 37.0 19.6 35.4C17.3 33.8 15.5 32.1 14.2 30.0C12.9 27.9 11.6 25.2 11.6 22.6C11.6 20.0 12.5 16.8 14.2 14.5C15.8 12.2 18.8 10.2 21.5 9.0C24.2 7.8 27.6 7.3 30.5 7.6C33.4 7.9 36.7 9.2 38.7 10.8C40.8 12.4 42.3 14.9 42.8 17.2C43.3 19.5 42.5 22.1 41.9 24.5C41.3 26.9 39.8 29.4 39.2 31.7C38.6 34.0 38.2 36.5 38.3 38.0C38.4 39.5 39.7 40.0 40.0 40.4L33 47.2" fill="none" stroke="#4f8ccb" stroke-width="1.800" stroke-linecap="round" stroke-linejoin="round"/><path d="M33.0 47.2C33.8 47.0 35.7 46.1 37.8 45.8C39.9 45.5 44.9 44.7 45.5 45.4C46.1 46.1 43.5 48.5 41.5 50.0C39.5 51.5 35.0 53.8 33.7 54.5" fill="none" stroke="#4f8ccb" stroke-width="1.500" stroke-linecap="round"/><circle cx="33" cy="47.200" r="1.800" fill="#1d5fa8"/></svg>
<div class="t" style="left:1392.70px;top:741.00px;font-size:12px;color:#9c9c9c;letter-spacing:-0.548px;">120%</div>
<svg class="abs" style="left:1415px;top:746px;" width="4" height="4" viewBox="0 0 4 4"><circle cx="2" cy="2.200" r="1.800" fill="#1d5fa8"/></svg>
<div class="abs" style="left:0px;top:58px;width:1px;height:701px;background:#01659b;"></div>
<div class="abs" style="left:1439px;top:58px;width:1px;height:701px;background:#01659b;"></div>
<div class="abs" style="left:0px;top:757px;width:1440px;height:1px;background:#7fb1ce;"></div>
<div class="abs" style="left:0px;top:758px;width:1440px;height:1px;background:#01659b;"></div>
</body>
</html>
